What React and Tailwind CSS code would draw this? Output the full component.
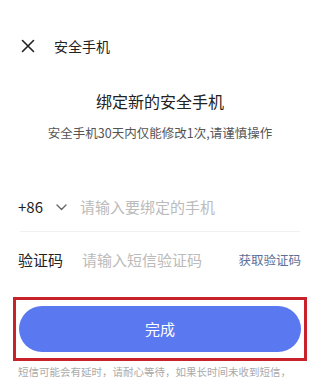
export default function App() {
  const font = { fontFamily: '"Noto Sans CJK SC", "Noto Sans", sans-serif' };
  return (
    <div className="w-[320px] h-[380px] overflow-hidden bg-white text-[#222]" style={font}>
      <div className="flex items-center h-[20px] mt-[36px] pl-[21px]">
        <svg width="14" height="14" viewBox="0 0 14 14" className="shrink-0">
          <path d="M1.5 1.5 L12.5 12.5 M12.5 1.5 L1.5 12.5" stroke="#222" strokeWidth="1.6" strokeLinecap="round" />
        </svg>
        <span className="ml-[19px] text-[14px] leading-[20px] text-[#222]">安全手机</span>
      </div>
      <div className="mt-[34px] text-center text-[16px] leading-[22px] text-[#222]">绑定新的安全手机</div>
      <div className="mt-[12px] text-center text-[12.5px] leading-[18px] text-[#555]">安全手机30天内仅能修改1次,请谨慎操作</div>
      <div className="mx-[18px] mt-[53px] flex items-center h-[24px]">
        <span className="text-[15px] leading-[24px] text-[#222]">+86</span>
        <svg width="11" height="7" viewBox="0 0 11 7" className="ml-[13px]">
          <path d="M1 1 L5.5 5.5 L10 1" stroke="#666" strokeWidth="1.4" fill="none" strokeLinecap="round" strokeLinejoin="round" />
        </svg>
        <span className="ml-[13px] text-[15px] leading-[24px] text-[#bbb]">请输入要绑定的手机</span>
      </div>
      <div className="mx-[20px] mt-[12px] h-px bg-[#f0f0f0]"></div>
      <div className="mx-[18px] mt-[16px] flex items-center h-[24px]">
        <span className="text-[15px] leading-[24px] text-[#222]">验证码</span>
        <span className="ml-[19px] text-[15px] leading-[24px] text-[#bbb]">请输入短信验证码</span>
        <span className="ml-auto mr-[1px] text-[12.5px] leading-[24px] text-[#5d6f99]">获取验证码</span>
      </div>
      <div className="mx-[13px] mt-[25px] border-[3px] border-[#c8232b] px-[3px] py-[6px]">
        <div className="h-[46px] rounded-full bg-[#5a78ef] flex items-center justify-center text-white text-[15px]">完成</div>
      </div>
      <div className="ml-[18px] w-[276px] mt-[3px] text-[10.5px] leading-[15px] text-[#aaa]">
        短信可能会有延时，请耐心等待，如果长时间未收到短信，可尝试使用语音验证码
      </div>
    </div>
  );
}
